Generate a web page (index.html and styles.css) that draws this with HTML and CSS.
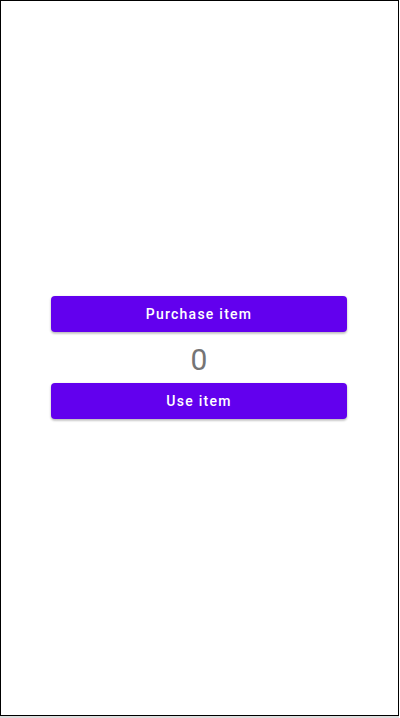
FILE: index.html
```html
<!DOCTYPE html>
<html>
<head>
<meta charset="utf-8">
<link rel="stylesheet" href="styles.css">
</head>
<body>
<div class="frame">
  <button class="btn">Purchase item</button>
  <div class="count">0</div>
  <button class="btn">Use item</button>
</div>
<div class="strip"></div>
</body>
</html>
```
FILE: styles.css
```css
html, body {
  margin: 0;
  padding: 0;
  background: #ffffff;
}
body {
  width: 400px;
  height: 718px;
  overflow: hidden;
  font-family: Roboto, "Liberation Sans", sans-serif;
}
.frame {
  width: 399px;
  height: 716px;
  box-sizing: border-box;
  border: 1px solid #000000;
  padding: 295px 0 0 50px;
  display: flex;
  flex-direction: column;
  align-items: flex-start;
  justify-content: flex-start;
  background: #ffffff;
}
.strip {
  width: 399px;
  height: 2px;
  background: #dcdcdc;
}
.btn {
  width: 296px;
  height: 36px;
  border: none;
  border-radius: 4px;
  background: #6200ee;
  color: #ffffff;
  font-family: Roboto, "Liberation Sans", sans-serif;
  font-size: 14px;
  font-weight: 500;
  letter-spacing: 1.25px;
  padding: 0;
  box-shadow: 0 1px 3px rgba(0,0,0,0.2), 0 2px 2px rgba(0,0,0,0.12);
}
.count {
  width: 296px;
  height: 51px;
  box-sizing: border-box;
  padding-top: 4px;
  line-height: 47px;
  font-size: 30px;
  color: #757575;
  text-align: center;
}
```
